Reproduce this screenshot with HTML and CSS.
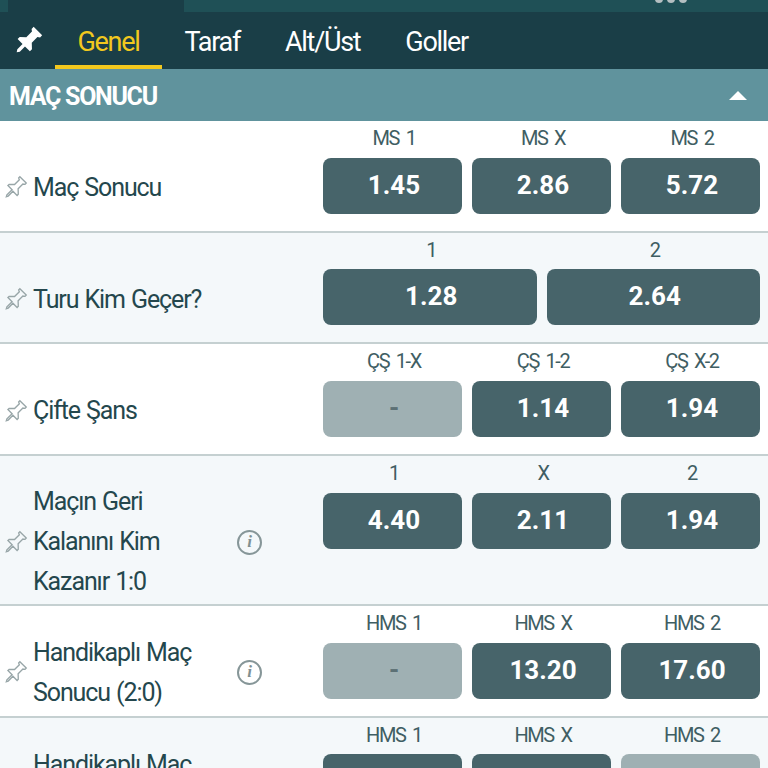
FILE: index.html
```html
<!DOCTYPE html>
<html lang="en">
<head>
    <meta charset="UTF-8">
    <meta name="viewport" content="width=device-width, initial-scale=1.0">
    <title>Maç Sonucu</title>
    <link rel="stylesheet" href="styles.css">
</head>
<body>

    <!-- Strip left over from the header above the tabs -->
    <div class="top-strip">
        <div class="top-strip-tab"></div>
        <svg class="top-dots" width="32" height="4" viewBox="0 0 32 4">
            <circle cx="4" cy="-1" r="4"></circle>
            <circle cx="16" cy="-1" r="4"></circle>
            <circle cx="28" cy="-1" r="4"></circle>
        </svg>
    </div>

    <nav class="tabs">
        <svg class="tabs-pin" width="32" height="32" viewBox="0 0 24 24">
            <path transform="rotate(45 12 12)" d="M7.5 1.500h9v2.200l-1.600 1.200v6l3.600 3.400v2.200h-5.200V22l-1.300 2-1.300-2v-5.500H5.500v-2.200l3.600-3.400v-6L7.500 3.700z"></path>
        </svg>
        <a class="tab active">Genel</a>
        <a class="tab">Taraf</a>
        <a class="tab">Alt/Üst</a>
        <a class="tab">Goller</a>
    </nav>

    <div class="section-head">
        <span>MAÇ SONUCU</span>
        <span class="caret"></span>
    </div>

    <div class="market">
        <div class="market-name">
            <svg class="pin" width="27" height="27" viewBox="0 0 24 24"><path transform="rotate(45 12 12)" d="M8 2.500h8v1.500l-1.500 1.200v6l3.500 3.300v1.500h-5.200V22L12 23.500 11.200 22v-6.500H6V14l3.500-3.300v-6L8 4z"></path></svg>
            <span class="market-title">Maç Sonucu</span>
        </div>
        <div class="odds">
            <div class="odd"><div class="odd-label">MS 1</div><div class="odd-btn">1.45</div></div>
            <div class="odd"><div class="odd-label">MS X</div><div class="odd-btn">2.86</div></div>
            <div class="odd"><div class="odd-label">MS 2</div><div class="odd-btn">5.72</div></div>
        </div>
    </div>

    <div class="market tinted">
        <div class="market-name">
            <svg class="pin" width="27" height="27" viewBox="0 0 24 24"><path transform="rotate(45 12 12)" d="M8 2.500h8v1.500l-1.500 1.200v6l3.500 3.300v1.500h-5.200V22L12 23.500 11.200 22v-6.500H6V14l3.500-3.300v-6L8 4z"></path></svg>
            <span class="market-title">Turu Kim Geçer?</span>
        </div>
        <div class="odds">
            <div class="odd"><div class="odd-label">1</div><div class="odd-btn">1.28</div></div>
            <div class="odd"><div class="odd-label">2</div><div class="odd-btn">2.64</div></div>
        </div>
    </div>

    <div class="market">
        <div class="market-name">
            <svg class="pin" width="27" height="27" viewBox="0 0 24 24"><path transform="rotate(45 12 12)" d="M8 2.500h8v1.500l-1.500 1.200v6l3.500 3.300v1.500h-5.200V22L12 23.500 11.200 22v-6.500H6V14l3.500-3.300v-6L8 4z"></path></svg>
            <span class="market-title">Çifte Şans</span>
        </div>
        <div class="odds">
            <div class="odd"><div class="odd-label">ÇŞ 1-X</div><div class="odd-btn off">-</div></div>
            <div class="odd"><div class="odd-label">ÇŞ 1-2</div><div class="odd-btn">1.14</div></div>
            <div class="odd"><div class="odd-label">ÇŞ X-2</div><div class="odd-btn">1.94</div></div>
        </div>
    </div>

    <div class="market tinted">
        <div class="market-name">
            <svg class="pin" width="27" height="27" viewBox="0 0 24 24"><path transform="rotate(45 12 12)" d="M8 2.500h8v1.500l-1.500 1.200v6l3.500 3.300v1.500h-5.200V22L12 23.500 11.200 22v-6.500H6V14l3.500-3.300v-6L8 4z"></path></svg>
            <span class="market-title">Maçın Geri Kalanını Kim Kazanır 1:0</span>
            <span class="info">i</span>
        </div>
        <div class="odds">
            <div class="odd"><div class="odd-label">1</div><div class="odd-btn">4.40</div></div>
            <div class="odd"><div class="odd-label">X</div><div class="odd-btn">2.11</div></div>
            <div class="odd"><div class="odd-label">2</div><div class="odd-btn">1.94</div></div>
        </div>
    </div>

    <div class="market">
        <div class="market-name">
            <svg class="pin" width="27" height="27" viewBox="0 0 24 24"><path transform="rotate(45 12 12)" d="M8 2.500h8v1.500l-1.500 1.200v6l3.500 3.300v1.500h-5.200V22L12 23.500 11.200 22v-6.500H6V14l3.500-3.300v-6L8 4z"></path></svg>
            <span class="market-title">Handikaplı Maç Sonucu (2:0)</span>
            <span class="info">i</span>
        </div>
        <div class="odds">
            <div class="odd"><div class="odd-label">HMS 1</div><div class="odd-btn off">-</div></div>
            <div class="odd"><div class="odd-label">HMS X</div><div class="odd-btn">13.20</div></div>
            <div class="odd"><div class="odd-label">HMS 2</div><div class="odd-btn">17.60</div></div>
        </div>
    </div>

    <div class="market tinted">
        <div class="market-name">
            <svg class="pin" width="27" height="27" viewBox="0 0 24 24"><path transform="rotate(45 12 12)" d="M8 2.500h8v1.500l-1.500 1.200v6l3.500 3.300v1.500h-5.200V22L12 23.500 11.200 22v-6.500H6V14l3.500-3.300v-6L8 4z"></path></svg>
            <span class="market-title">Handikaplı Maç Sonucu (1:0)</span>
            <span class="info">i</span>
        </div>
        <div class="odds">
            <div class="odd"><div class="odd-label">HMS 1</div><div class="odd-btn">2.15</div></div>
            <div class="odd"><div class="odd-label">HMS X</div><div class="odd-btn">3.40</div></div>
            <div class="odd"><div class="odd-label">HMS 2</div><div class="odd-btn off">-</div></div>
        </div>
    </div>

</body>
</html>
```

FILE: styles.css
```css
html, body {
    height: 768px;
    overflow: hidden;
}
body {
    margin: 0;
    font-family: Roboto, "Liberation Sans", sans-serif;
    background-color: #fff;
}

/* Header strip */
.top-strip {
    display: flex;
    height: 12px;
    background-color: #1f5056;
}
.top-strip-tab {
    width: 176px;
    margin-left: 8px;
    background-color: #1a3e47;
}
.top-dots {
    margin-left: auto;
    margin-right: 81px;
    fill: #b4bfc1;
}

/* Tabs */
.tabs {
    display: flex;
    height: 57px;
    background-color: #1a3e47;
}
.tabs-pin {
    flex: none;
    margin: 13px 11px 0 12px;
    fill: #fff;
}
.tab {
    box-sizing: border-box;
    padding: 0 22.500px;
    line-height: 61px;
    font-size: 27px;
    letter-spacing: -1.300px;
    color: #fff;
    border-bottom: 4px solid transparent;
}
.tab.active {
    color: #f2c81e;
    border-bottom-color: #f2c81e;
}

/* Section title */
.section-head {
    display: flex;
    align-items: center;
    justify-content: space-between;
    height: 52px;
    padding: 2px 21px 0 9px;
    box-sizing: border-box;
    background-color: #60939d;
    color: #fff;
    font-size: 25px;
    font-weight: 700;
    letter-spacing: -1.300px;
}
.caret {
    width: 0;
    height: 0;
    margin-bottom: 2px;
    border-left: 9px solid transparent;
    border-right: 9px solid transparent;
    border-bottom: 9px solid #fff;
}

/* Market rows */
.market {
    display: flex;
    box-sizing: border-box;
    min-height: 111.700px;
    border-bottom: 2px solid #c5d0d1;
    background-color: #fff;
}
.market.tinted {
    background-color: #f4f8fa;
}
.market-name {
    display: flex;
    align-items: center;
    width: 323px;
    box-sizing: border-box;
    padding: 26px 0 2px 2px;
}
.pin {
    flex: none;
    margin-right: 4px;
    fill: none;
    stroke: #98a6a8;
    stroke-width: 1.200;
}
.market-title {
    width: 190px;
    font-size: 25px;
    line-height: 40px;
    letter-spacing: -1.100px;
    word-spacing: 1px;
    color: #24474d;
}
.info {
    flex: none;
    box-sizing: border-box;
    width: 25px;
    height: 25px;
    margin-left: 14px;
    border: 2.500px solid #869698;
    border-radius: 50%;
    font-family: "Liberation Serif", serif;
    font-style: italic;
    font-weight: 700;
    font-size: 17px;
    line-height: 20px;
    text-align: center;
    color: #7f9092;
}

/* Odds */
.odds {
    display: flex;
    gap: 10px;
    width: 437px;
}
.odd {
    flex: 1;
    text-indent: 3px;
}
.odd-label {
    height: 36.700px;
    line-height: 34px;
    text-align: center;
    font-size: 20px;
    letter-spacing: -1.400px;
    word-spacing: 3px;
    color: #3f5e63;
}
.odd-btn {
    height: 56px;
    line-height: 54px;
    text-align: center;
    background-color: #47646a;
    border-radius: 8px;
    color: #fff;
    font-size: 26px;
    font-weight: 700;
}
.odd-btn.off {
    background-color: #9fb0b3;
    color: #5c7075;
}
```
